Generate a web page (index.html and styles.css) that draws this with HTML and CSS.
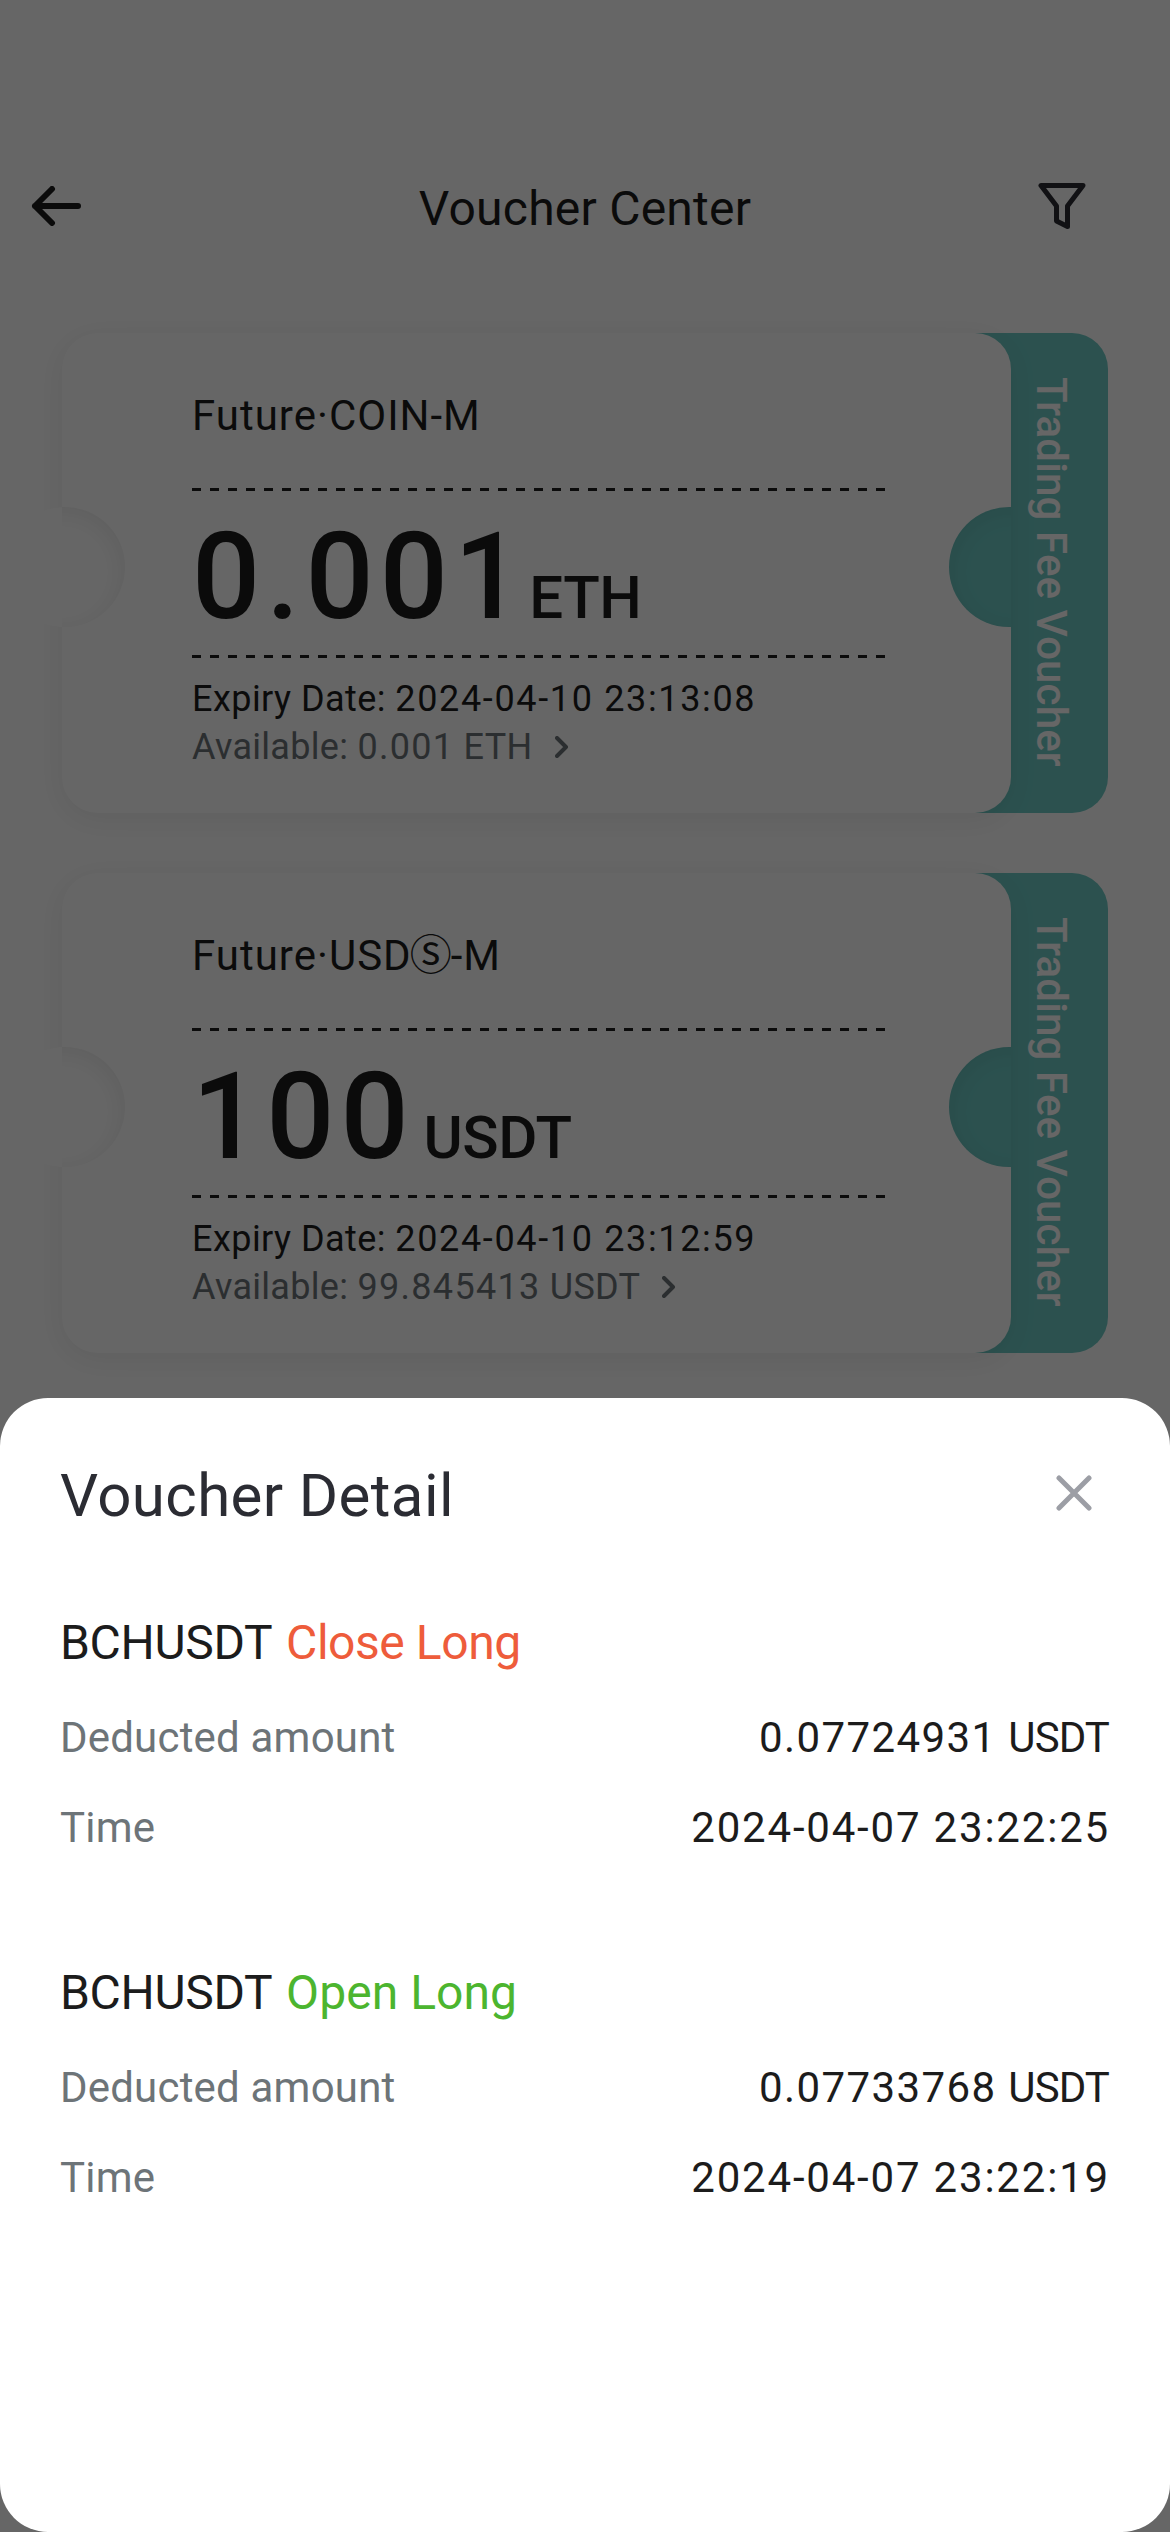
FILE: index.html
```html
<!DOCTYPE html>
<html lang="en">
<head>
<meta charset="utf-8">
<title>Voucher Center</title>
<link rel="stylesheet" href="styles.css">
</head>
<body>
<div class="screen">
  <header class="topbar">
    <svg class="icon-back" viewBox="0 0 50 40"><path d="M21 3 4 20l17 17M4 20h43"/></svg>
    <h1 class="topbar-title">Voucher Center</h1>
    <svg class="icon-filter" viewBox="0 0 48 48"><path d="M3 3.500h42L29.500 24v20.500L18.500 39V24z"/></svg>
  </header>
  <main class="vouchers">
    <article class="voucher">
      <div class="voucher-body">
        <h2 class="voucher-type">Future·COIN-M</h2>
        <div class="dash"></div>
        <div class="amount"><span class="amount-value">0.001</span><span class="amount-unit eth">ETH</span></div>
        <div class="dash"></div>
        <p class="expiry">Expiry Date: <span class="digits">2024-04-10 23:13:08</span></p>
        <p class="available"><span>Available: <span class="digits">0.001</span> ETH</span><svg class="chevron" viewBox="0 0 14 22"><path d="M2 2l9 9-9 9"/></svg></p>
      </div>
      <div class="voucher-stub"><span class="stub-label">Trading Fee Voucher</span></div>
      <i class="notch notch-left"></i><i class="notch notch-right"></i>
    </article>
    <article class="voucher">
      <div class="voucher-body">
        <h2 class="voucher-type">Future·USD<span class="circled">Ⓢ</span>-M</h2>
        <div class="dash"></div>
        <div class="amount"><span class="amount-value">100</span><span class="amount-unit usdt">USDT</span></div>
        <div class="dash"></div>
        <p class="expiry">Expiry Date: <span class="digits">2024-04-10 23:12:59</span></p>
        <p class="available"><span>Available: <span class="digits">99.845413</span> USDT</span><svg class="chevron" viewBox="0 0 14 22"><path d="M2 2l9 9-9 9"/></svg></p>
      </div>
      <div class="voucher-stub"><span class="stub-label">Trading Fee Voucher</span></div>
      <i class="notch notch-left"></i><i class="notch notch-right"></i>
    </article>
  </main>
  <div class="scrim"></div>
  <section class="sheet">
    <div class="sheet-head">
      <h2 class="sheet-title">Voucher Detail</h2>
      <svg class="icon-close" viewBox="0 0 36 36"><path d="M3 3l30 30M33 3 3 33"/></svg>
    </div>
    <div class="record">
      <h3 class="record-title">BCHUSDT <span class="close">Close Long</span></h3>
      <div class="row"><span class="label">Deducted amount</span><span class="value amount-used"><span class="digits">0.07724931 </span>USDT</span></div>
      <div class="row"><span class="label">Time</span><span class="value digits">2024-04-07 23:22:25</span></div>
    </div>
    <div class="record">
      <h3 class="record-title">BCHUSDT <span class="open">Open Long</span></h3>
      <div class="row"><span class="label">Deducted amount</span><span class="value amount-used"><span class="digits">0.07733768 </span>USDT</span></div>
      <div class="row"><span class="label">Time</span><span class="value digits">2024-04-07 23:22:19</span></div>
    </div>
  </section>
</div>
</body>
</html>
```
FILE: styles.css
```css
* { box-sizing: border-box; margin: 0; padding: 0; }
body { width: 1170px; height: 2532px; background: #fff; font-family: Roboto, "Liberation Sans", sans-serif; color: #1c1c1c; }
h1, h2, h3 { font-weight: 400; }
svg { display: block; fill: none; stroke-linecap: round; stroke-linejoin: round; flex: none; }
.digits { letter-spacing: .043em; }

.screen { position: relative; width: 1170px; height: 2532px; overflow: hidden; padding-top: 148px; }
.topbar { display: grid; grid-template-columns: 1fr auto 1fr; align-items: center; height: 116px; }
.icon-back { width: 50px; height: 40px; margin-left: 31px; stroke: #1c1c1c; stroke-width: 6; }
.icon-filter { width: 48px; height: 48px; margin-right: 84px; justify-self: end; stroke: #2b2c33; stroke-width: 5; }
.topbar-title { padding-top: 6px; font-size: 48px; line-height: 60px; letter-spacing: .24px; }

.vouchers { display: flex; flex-direction: column; gap: 60px; padding: 69px 62px 0; }
.voucher { position: relative; display: flex; height: 480px; }
.voucher-body { position: relative; z-index: 1; width: 949px; padding: 53px 126px 0 130px; border-radius: 36px; background: #fff; box-shadow: 0 6px 30px rgba(0, 0, 0, .07); }
.voucher-stub { display: flex; justify-content: center; width: 157px; margin-left: -60px; padding: 44px 17px 0 60px; border-radius: 0 36px 36px 0; background: #6ecbc6; }
.stub-label { position: relative; z-index: 2; writing-mode: vertical-rl; font-size: 42px; font-weight: 500; line-height: 60px; letter-spacing: .15px; color: #fff; }

.notch { position: absolute; z-index: 1; top: 174px; width: 120px; height: 120px; border-radius: 50%; }
.notch-left { left: -57px; background: #fff; clip-path: inset(0 0 0 30px); }
.notch-left::after { content: ""; position: absolute; inset: 0; border-radius: 50%; box-shadow: inset -3px 5px 22px rgba(0, 0, 0, .07); clip-path: inset(0 0 0 57px); }
.notch-right { left: 887px; background: #6ecbc6; clip-path: inset(0 58px 0 0); box-shadow: inset 3px 5px 22px rgba(0, 0, 0, .07); }

.voucher-type { font-size: 42px; line-height: 60px; letter-spacing: 1px; white-space: nowrap; }
.circled { margin: 0 -1px 0 -2px; font-family: "Noto Sans CJK JP", sans-serif; line-height: 1; letter-spacing: 0; }
.dash { height: 3px; margin-top: 42px; background: repeating-linear-gradient(90deg, #1c1c1c 0 9px, transparent 9px 18px); }
.amount { display: flex; align-items: baseline; height: 120px; margin-top: 26px; line-height: 120px; font-weight: 500; }
.amount-value { font-size: 120px; letter-spacing: 6px; }
.amount-unit { font-size: 60px; letter-spacing: -.5px; }
.eth { margin-left: 1px; }
.usdt { margin-left: 9px; }
.amount + .dash { margin-top: 18px; }
.expiry { margin-top: 18px; font-size: 36px; line-height: 47px; letter-spacing: .45px; }
.expiry .digits { letter-spacing: 1.65px; }
.available { display: flex; align-items: center; font-size: 36px; line-height: 48px; letter-spacing: .3px; color: #6d7478; }
.available .digits { letter-spacing: 1.3px; }
.chevron { width: 14px; height: 22px; margin-left: 22px; stroke: #6d7478; stroke-width: 4; }

.scrim { position: absolute; z-index: 3; inset: 0; background: rgba(0, 0, 0, .6); }

.sheet { position: absolute; z-index: 4; left: 0; right: 0; bottom: 0; height: 1134px; padding: 60px 62px 0 60px; border-radius: 48px; background: #fff; }
.sheet-head { display: flex; justify-content: space-between; align-items: flex-start; height: 76px; }
.sheet-title { font-size: 60px; line-height: 76px; letter-spacing: .4px; color: #2b2c33; }
.icon-close { width: 36px; height: 36px; margin: 17px 16px 0 0; stroke: #9c9ea5; stroke-width: 5; }
.record { padding-top: 79px; }
.record + .record { padding-top: 107px; }
.record-title { font-size: 48px; line-height: 60px; letter-spacing: -.3px; }
.close, .open { margin-left: 3px; }
.close { color: #ee5c3b; letter-spacing: -.45px; }
.open { color: #4cb52f; letter-spacing: .05px; }
.row { display: flex; justify-content: space-between; margin-top: 37px; font-size: 42px; line-height: 56px; }
.row + .row { margin-top: 34px; }
.label { color: #6d7478; letter-spacing: .2px; }
.value.digits { margin-right: -2px; }
.amount-used { margin-right: -1px; letter-spacing: -.9px; }
.amount-used .digits { letter-spacing: 1.4px; }
```
